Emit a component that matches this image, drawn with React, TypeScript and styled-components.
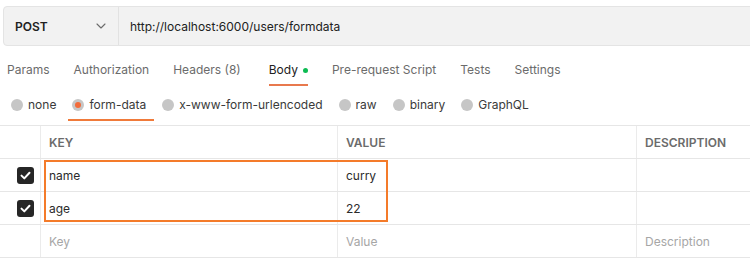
import * as React from 'react';
import styled, { createGlobalStyle } from 'styled-components';

const GlobalStyle = createGlobalStyle`
	html, body {
		margin: 0;
		padding: 0;
		background: #ffffff;
	}
	body {
		font-family: Inter, "Open Sans", "Liberation Sans", sans-serif;
		color: #212121;
		overflow: hidden;
	}
`;

const Page = styled.div`
	width: 750px;
	height: 264px;
	overflow: hidden;
`;

const UrlBar = styled.div`
	display: flex;
	align-items: center;
	height: 38px;
	margin: 6px -6px 0 3px;
	background: #f2f2f2;
	border: 1px solid #e4e4e4;
	border-radius: 4px;
`;

const MethodSelect = styled.div`
	display: flex;
	align-items: center;
	justify-content: space-between;
	width: 115px;
	height: 100%;
	box-sizing: border-box;
	padding: 0 12px 0 11px;
	border-right: 1px solid #e2e2e2;
	font-size: 12px;
	font-weight: 600;
	color: #212121;
`;

const UrlText = styled.div`
	padding-left: 11px;
	font-size: 12px;
	color: #212121;
`;

const Tabs = styled.div`
	display: flex;
	gap: 24px;
	margin: 11px 0 0 7px;
`;

const Tab = styled.div<{ $active?: boolean }>`
	display: flex;
	align-items: center;
	gap: 5px;
	margin-left: ${props => (props.$active ? '4px' : '0')};
	padding: 5px 0 6px;
	line-height: 16px;
	font-size: 12px;
	color: ${props => (props.$active ? '#212121' : '#6b6b6b')};
	border-bottom: 2px solid ${props => (props.$active ? '#e8794d' : 'transparent')};
`;

const Dot = styled.span`
	width: 5px;
	height: 5px;
	border-radius: 50%;
	background: #0cbb52;
`;

const Radios = styled.div`
	display: flex;
	gap: 4px;
	margin: 5px 0 0 7px;
`;

const RadioOption = styled.div<{ $active?: boolean }>`
	display: flex;
	align-items: center;
	gap: 5px;
	padding: 6px 8px 6px 4px;
	line-height: 16px;
	font-size: 12px;
	color: #3a3a3a;
	border-bottom: 2px solid ${props => (props.$active ? '#f07a3a' : 'transparent')};
`;

const RadioCircle = styled.span<{ $active?: boolean }>`
	position: relative;
	width: 12px;
	height: 12px;
	border-radius: 50%;
	background: #c6c6c6;
	&::after {
		content: '';
		display: ${props => (props.$active ? 'block' : 'none')};
		position: absolute;
		left: 3px;
		top: 3px;
		width: 6px;
		height: 6px;
		border-radius: 50%;
		background: #f26b3a;
	}
`;

const Table = styled.div`
	margin-top: 4px;
	border-top: 1px solid #e6e6e6;
`;

const Row = styled.div`
	display: grid;
	grid-template-columns: 40px 297px 299px 1fr;
	height: 33px;
	border-bottom: 1px solid #e6e6e6;
	box-sizing: border-box;
`;

const Cell = styled.div<{ $head?: boolean; $placeholder?: boolean }>`
	display: flex;
	align-items: center;
	padding-left: 8px;
	border-left: 1px solid #ebebeb;
	font-size: 12px;
	font-weight: ${props => (props.$head ? 600 : 400)};
	color: ${props => (props.$head ? '#6b6b6b' : props.$placeholder ? '#a6a6a6' : '#2b2b2b')};
`;

const CheckCell = styled.div`
	display: flex;
	align-items: center;
	justify-content: flex-end;
	padding-right: 6px;
`;

const Checkbox = styled.span`
	display: flex;
	align-items: center;
	justify-content: center;
	width: 17px;
	height: 17px;
	border-radius: 3px;
	background: #262626;
`;

const DataRows = styled.div`
	position: relative;
`;

// the orange box drawn over the screenshot
const Highlight = styled.div`
	position: absolute;
	left: 44px;
	top: 1px;
	width: 344px;
	height: 62px;
	box-sizing: border-box;
	border: 2px solid #f47b2a;
	pointer-events: none;
`;

const Chevron = () => (
	<svg width="10" height="6" viewBox="0 0 10 6" fill="none">
		<path d="M1 1l4 4 4-4" stroke="#6b6b6b" strokeWidth="1.1" strokeLinecap="round" strokeLinejoin="round" />
	</svg>
);

const Tick = () => (
	<svg width="11" height="9" viewBox="0 0 11 9" fill="none">
		<path d="M1.5 4.6l2.8 2.8L9.5 1.8" stroke="#ffffff" strokeWidth="2" strokeLinecap="round" strokeLinejoin="round" />
	</svg>
);

const tabs = ['Params', 'Authorization', 'Headers (8)', 'Body', 'Pre-request Script', 'Tests', 'Settings'];
const bodyTypes = ['none', 'form-data', 'x-www-form-urlencoded', 'raw', 'binary', 'GraphQL'];
const params = [
	{ key: 'name', value: 'curry' },
	{ key: 'age', value: '22' },
];

export default function App() {
	return (
		<Page>
			<GlobalStyle />
			<UrlBar>
				<MethodSelect>
					POST
					<Chevron />
				</MethodSelect>
				<UrlText>http://localhost:6000/users/formdata</UrlText>
			</UrlBar>
			<Tabs>
				{tabs.map(t => (
					<Tab key={t} $active={t === 'Body'}>
						{t}
						{t === 'Body' && <Dot />}
					</Tab>
				))}
			</Tabs>
			<Radios>
				{bodyTypes.map(b => (
					<RadioOption key={b} $active={b === 'form-data'}>
						<RadioCircle $active={b === 'form-data'} />
						{b}
					</RadioOption>
				))}
			</Radios>
			<Table>
				<Row>
					<CheckCell />
					<Cell $head={true}>KEY</Cell>
					<Cell $head={true}>VALUE</Cell>
					<Cell $head={true}>DESCRIPTION</Cell>
				</Row>
				<DataRows>
					{params.map(p => (
						<Row key={p.key}>
							<CheckCell>
								<Checkbox><Tick /></Checkbox>
							</CheckCell>
							<Cell>{p.key}</Cell>
							<Cell>{p.value}</Cell>
							<Cell />
						</Row>
					))}
					<Highlight />
				</DataRows>
				<Row>
					<CheckCell />
					<Cell $placeholder={true}>Key</Cell>
					<Cell $placeholder={true}>Value</Cell>
					<Cell $placeholder={true}>Description</Cell>
				</Row>
			</Table>
		</Page>
	);
}
